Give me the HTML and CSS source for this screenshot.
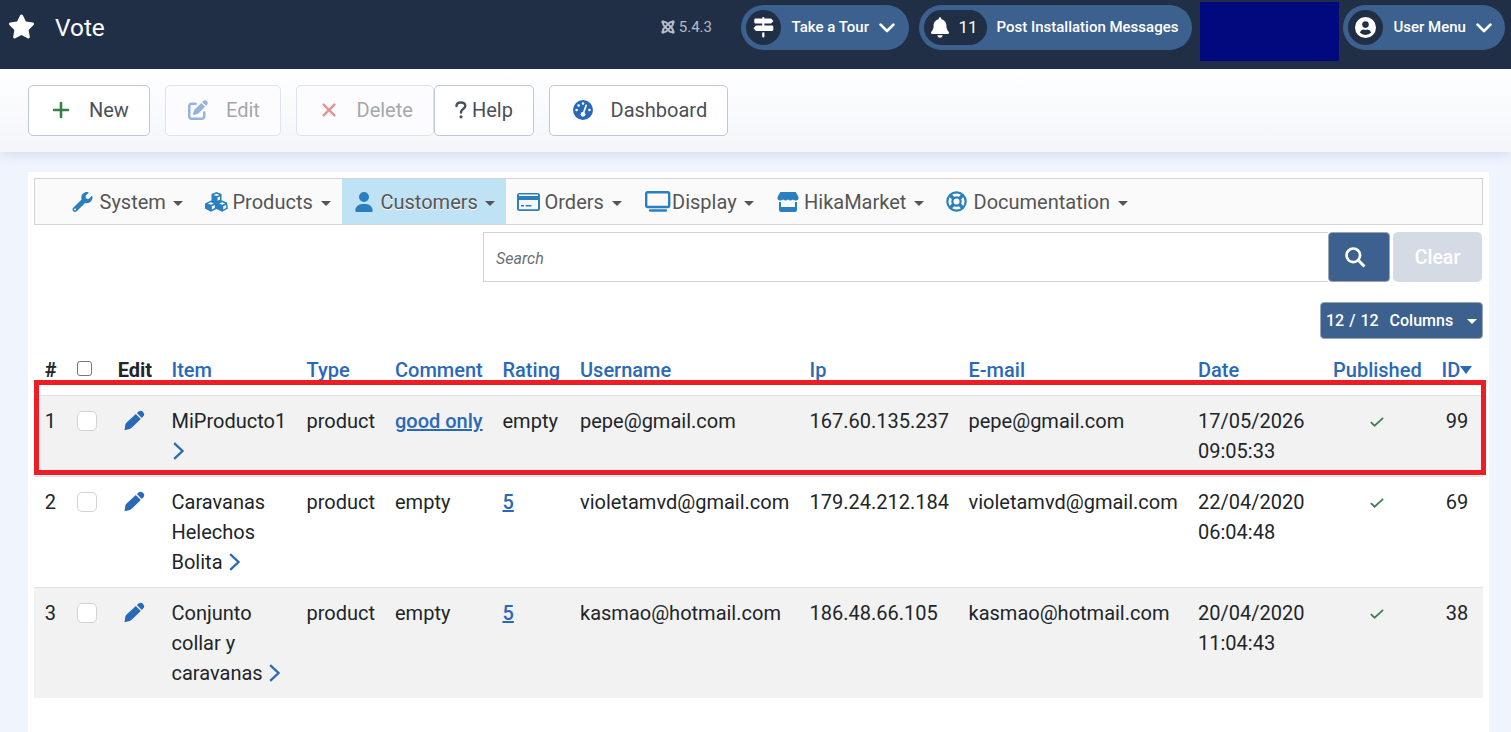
FILE: index.html
```html
<!DOCTYPE html>
<html lang="en">
<head>
<meta charset="utf-8">
<title>Vote</title>
<link rel="stylesheet" href="styles.css">
</head>
<body>
<svg class="defs" aria-hidden="true">
  <symbol id="pencil" viewBox="0 0 21 21"><path d="M.5 20.3 1.4 14.6Q1.700 13.400 2.600 12.600L11.800 3.900 16.800 8.900 8 17.600Q7 18.500 5.800 18.900ZM12.900 2.900 14.900 1.200Q16.900 0 18.900 1.700 21 3.800 19.800 5.800L17.900 7.900Z"/></symbol>
  <symbol id="chevron" viewBox="0 0 16 10"><path d="M1.6 1.6 8 8 14.4 1.6" fill="none" stroke="currentColor" stroke-width="2.7" stroke-linecap="round" stroke-linejoin="round"/></symbol>
  <symbol id="angle" viewBox="0 0 12 18"><path d="M1.2 1.2 9.5 9 1.2 16.8" fill="none" stroke="currentColor" stroke-width="2.3"/></symbol>
  <symbol id="check" viewBox="0 0 14 10"><path d="M.8 5.1 4.6 8.7 13.1 .9" fill="none" stroke="currentColor" stroke-width="1.8"/></symbol>
</svg>

<header class="header">
  <svg class="star" viewBox="0 0 576 512"><path d="M259.3 17.8L194 150.2 47.9 171.5c-26.2 3.8-36.7 36.1-17.7 54.6l105.7 103-25 145.5c-4.5 26.3 23.2 46 46.4 33.7L288 439.6l130.7 68.7c23.2 12.2 50.9-7.4 46.4-33.7l-25-145.5 105.7-103c19-18.5 8.5-50.8-17.7-54.6L382 150.2 316.7 17.8c-11.7-23.6-45.6-23.9-57.4 0z"/></svg>
  <h1 class="title">Vote</h1>
  <div class="version">
    <svg viewBox="0 0 14 14"><g fill="none" stroke="currentColor" stroke-width="1.9"><path d="M2.3 2.3Q4.6 1.4 6 3.2L10.8 8Q12.6 10 11.7 11.7M11.7 2.3Q12.6 4.600 10.800 6L6 10.800Q4 12.600 2.300 11.700M2.300 11.700Q1.400 9.500 3.200 8L8 3.200Q10 1.400 11.700 2.300M11.700 11.700Q9.500 12.600 8 10.800L3.200 6Q1.400 4 2.300 2.300"/></g><circle cx="2" cy="2" r="1.7"/><circle cx="12" cy="2" r="1.7"/><circle cx="2" cy="12" r="1.7"/><circle cx="12" cy="12" r="1.7"/></svg>
    <span>5.4.3</span>
  </div>
  <a class="pill tour">
    <span class="pill-icon"><svg width="22" height="21" viewBox="0 0 22 21"><path d="M9.200 1Q9.200 0 10.300 0T11.400 1V1.500H18L20.500 4 18 6.500H2.500Q1.300 6.500 1.300 5.300V2.700Q1.300 1.500 2.500 1.500H9.200ZM9.200 6.500H11.400V8.500H19Q20.300 8.500 20.300 9.700V12.800Q20.300 14 19 14H3L.500 11.200 3 8.500H9.200ZM9.200 15.500H11.400V19.500Q11.400 20.600 10.300 20.600T9.200 19.500Z"/></svg></span>
    <span class="pill-text">Take a Tour</span>
    <svg class="chev"><use href="#chevron"/></svg>
  </a>
  <a class="pill messages">
    <span class="pill-icon"><svg width="18" height="21" viewBox="0 0 448 512"><path d="M224 0c-17.700 0-32 14.300-32 32V51.200C119 66 64 130.600 64 208v18.800c0 47-17.300 92.400-48.500 127.600l-7.400 8.300c-8.400 9.400-10.400 22.900-5.300 34.400S19.400 416 32 416H416c12.600 0 24-7.400 29.200-18.900s3.100-25-5.300-34.400l-7.400-8.300C401.300 319.200 384 273.900 384 226.800V208c0-77.400-55-142-128-156.800V32c0-17.700-14.300-32-32-32zm45.300 493.300c12-12 18.700-28.300 18.700-45.300H224 160c0 17 6.700 33.300 18.700 45.300s28.300 18.700 45.300 18.700s33.300-6.700 45.300-18.700z"/></svg><b>11</b></span>
    <span class="pill-text">Post Installation Messages</span>
  </a>
  <div class="redacted"></div>
  <a class="pill user">
    <span class="pill-icon"><svg width="21" height="21" viewBox="0 0 21 21"><path fill-rule="evenodd" d="M10.500 0A10.500 10.500 0 1 1 10.500 21 10.500 10.500 0 0 1 10.500 0ZM10.500 4.300A3.300 3.300 0 1 0 10.500 10.900 3.300 3.300 0 0 0 10.500 4.300ZM4.800 15.600Q7 18 10.500 18T16.200 15.600Q15 12.600 12.500 12.600 10.500 13.300 8.500 12.600 6 12.600 4.800 15.600Z"/></svg></span>
    <span class="pill-text">User Menu</span>
    <svg class="chev"><use href="#chevron"/></svg>
  </a>
</header>

<div class="toolbar">
  <button class="btn new"><svg viewBox="0 0 20 20"><path d="M10 3V17M3 10H17" fill="none" stroke="currentColor" stroke-width="2.6" stroke-linecap="round"/></svg><span>New</span></button>
  <button class="btn edit off"><svg viewBox="0 0 512 512"><path d="M471.600 21.700c-21.900-21.900-57.300-21.900-79.200 0L362.300 51.700l97.900 97.900 30.100-30.100c21.900-21.900 21.900-57.300 0-79.200L471.600 21.700zm-299.200 220c-6.100 6.100-10.800 13.600-13.500 21.900l-29.600 88.800c-2.900 8.600-.6 18.100 5.800 24.600s15.900 8.700 24.600 5.800l88.800-29.600c8.200-2.700 15.700-7.400 21.900-13.500L437.700 172.300 339.700 74.300 172.400 241.700zM96 64C43 64 0 107 0 160V416c0 53 43 96 96 96H352c53 0 96-43 96-96V320c0-17.700-14.300-32-32-32s-32 14.300-32 32v96c0 17.700-14.300 32-32 32H96c-17.700 0-32-14.300-32-32V160c0-17.700 14.300-32 32-32h96c17.700 0 32-14.300 32-32s-14.300-32-32-32H96z"/></svg><span>Edit</span></button>
  <button class="btn delete off"><svg viewBox="0 0 20 20"><path d="M4.600 4.600 15.400 15.400M15.400 4.600 4.600 15.400" fill="none" stroke="currentColor" stroke-width="2.400" stroke-linecap="round"/></svg><span>Delete</span></button>
  <button class="btn help"><svg viewBox="0 0 12 18"><path d="M1.500 5Q1.500 1.500 5.700 1.500 10.300 1.500 10.300 5C10.300 8 6 7.500 6 11.500" fill="none" stroke="currentColor" stroke-width="2.400" stroke-linecap="round"/><circle cx="6" cy="15.800" r="1.600"/></svg><span>Help</span></button>
  <button class="btn dash"><svg viewBox="0 0 20 20"><circle cx="10" cy="10" r="10"/><g fill="#fff"><circle cx="3.600" cy="10" r="1.300"/><circle cx="5.600" cy="5.500" r="1.300"/><circle cx="10" cy="3.500" r="1.300"/><circle cx="16.400" cy="10" r="1.300"/><circle cx="10" cy="14.300" r="2.400"/></g><path d="M10.300 13.500 13.200 5.300" stroke="#fff" stroke-width="1.700" stroke-linecap="round"/></svg><span>Dashboard</span></button>
</div>

<main class="panel">
  <nav class="menu">
    <a class="item"><i><svg width="21" height="20" viewBox="0 0 512 512"><path d="M507.730 109.100c-2.240-9.030-13.540-12.090-20.120-5.510l-74.360 74.360-67.880-11.310-11.310-67.880 74.360-74.360c6.620-6.620 3.430-17.900-5.660-20.160-47.380-11.740-99.550.91-136.580 37.930-39.640 39.640-50.550 97.100-34.050 147.200L18.740 402.760c-24.990 24.990-24.990 65.510 0 90.500 24.990 24.990 65.510 24.990 90.500 0l213.210-213.210c50.120 16.710 107.470 5.680 147.370-34.220 37.070-37.070 49.700-89.320 37.910-136.730zM64 472c-13.250 0-24-10.750-24-24 0-13.260 10.750-24 24-24s24 10.740 24 24c0 13.250-10.750 24-24 24z"/></svg></i><span>System</span></a>
    <a class="item"><i><svg width="23" height="20" viewBox="0 0 23 20"><path fill-rule="evenodd" d="M11.500 0 16.500 2V8.300L22 10.500 23 16.500 17.200 19.800 11.500 17 5.800 19.800 0 16.500V11.500L6.500 8.300V2ZM11.500 1.700 8.500 2.900 11.500 4.100 14.500 2.900ZM12.500 5.600V8.700L15 7.600V4.500ZM5.800 10.200 2.700 11.500 5.800 12.700 8.900 11.500ZM17.200 10.200 14.100 11.500 17.200 12.700 20.300 11.500ZM6.800 14.300V17.500L9.800 16V13ZM18.200 14.300V17.500L21.200 16V13Z"/></svg></i><span>Products</span></a>
    <a class="item active"><i class="in"><svg width="18" height="20" viewBox="0 0 448 512"><path d="M224 256A128 128 0 1 0 224 0a128 128 0 1 0 0 256zm-45.700 48C79.800 304 0 383.800 0 482.300C0 498.700 13.300 512 29.700 512H418.300c16.400 0 29.700-13.300 29.700-29.700C448 383.800 368.200 304 269.700 304H178.300z"/></svg></i><span>Customers</span></a>
    <a class="item"><i><svg width="23" height="18" viewBox="0 0 23 18"><path fill-rule="evenodd" d="M2.500 0H20.500Q23 0 23 2.500V15.500Q23 18 20.500 18H2.500Q0 18 0 15.500V2.500Q0 0 2.500 0ZM2 1.500V3H21V1.500ZM2 7V16.200H21V7ZM4 12H7V13.500H4ZM8.500 12H14.500V13.500H8.500Z"/></svg></i><span>Orders</span></a>
    <a class="item"><i><svg width="26" height="21" viewBox="0 0 26 21"><rect x="1.200" y="1.300" width="23" height="14.700" rx="1.500" fill="none" stroke="currentColor" stroke-width="2.400"/><path d="M5 19.500H21" stroke="currentColor" stroke-width="2.300" stroke-linecap="round"/></svg></i><span>Display</span></a>
    <a class="item"><i><svg width="22" height="20" viewBox="0 0 22 20"><path d="M3.300 0H18.700L21.500 5Q22 8.200 19 8.500 17 8.700 15.900 7.500 13.500 9.300 11 7.500 8.500 9.300 6.100 7.500 5 8.700 3 8.500 0 8.200.500 5ZM2 10H4V15H18V10H20V18Q20 20 18 20H4Q2 20 2 18Z"/></svg></i><span>HikaMarket</span></a>
    <a class="item"><i><svg width="21" height="21" viewBox="0 0 21 21"><g fill="none" stroke="currentColor"><circle cx="10.500" cy="10.500" r="9.200" stroke-width="2.200"/><circle cx="10.500" cy="10.500" r="4.100" stroke-width="2.200"/><path d="M4 4 8 8M17 4 13 8M4 17 8 13M17 17 13 13" stroke-width="3.300"/></g></svg></i><span>Documentation</span></a>
  </nav>

  <div class="search">
    <input type="text" placeholder="Search">
    <button class="go"><svg viewBox="0 0 21 21"><circle cx="8.300" cy="8.300" r="6.800" fill="none" stroke="#fff" stroke-width="2.700"/><path d="M13.300 13.300 19.500 19.500" stroke="#fff" stroke-width="3"/></svg></button>
    <button class="clear">Clear</button>
  </div>
  <div class="columns"><button><span>12 / 12</span><span>Columns</span></button></div>

  <div class="list">
    <table>
      <colgroup><col class="c1"><col class="c2"><col class="c3"><col class="c4"><col class="c5"><col class="c6"><col class="c7"><col class="c8"><col class="c9"><col class="c10"><col class="c11"><col class="c12"><col class="c13"></colgroup>
      <thead><tr><th>#</th><th><span class="all"></span></th><th>Edit</th><th><a>Item</a></th><th><a>Type</a></th><th><a>Comment</a></th><th><a>Rating</a></th><th><a>Username</a></th><th><a>Ip</a></th><th><a>E-mail</a></th><th><a>Date</a></th><th><a>Published</a></th><th><a class="sorted">ID</a></th></tr></thead>
      <tbody>
        <tr><td>1</td><td><span class="box"></span></td><td><svg class="pen"><use href="#pencil"/></svg></td><td>MiProducto1 <svg class="angle"><use href="#angle"/></svg></td><td>product</td><td><a class="link">good only</a></td><td>empty</td><td>pepe@gmail.com</td><td>167.60.135.237</td><td>pepe@gmail.com</td><td>17/05/2026 09:05:33</td><td class="mid"><svg class="check"><use href="#check"/></svg></td><td class="mid">99</td></tr>
        <tr><td>2</td><td><span class="box"></span></td><td><svg class="pen"><use href="#pencil"/></svg></td><td>Caravanas Helechos Bolita <svg class="angle"><use href="#angle"/></svg></td><td>product</td><td>empty</td><td><a class="link">5</a></td><td>violetamvd@gmail.com</td><td>179.24.212.184</td><td>violetamvd@gmail.com</td><td>22/04/2020 06:04:48</td><td class="mid"><svg class="check"><use href="#check"/></svg></td><td class="mid">69</td></tr>
        <tr><td>3</td><td><span class="box"></span></td><td><svg class="pen"><use href="#pencil"/></svg></td><td>Conjunto collar y caravanas <svg class="angle"><use href="#angle"/></svg></td><td>product</td><td>empty</td><td><a class="link">5</a></td><td>kasmao@hotmail.com</td><td>186.48.66.105</td><td>kasmao@hotmail.com</td><td>20/04/2020 11:04:43</td><td class="mid"><svg class="check"><use href="#check"/></svg></td><td class="mid">38</td></tr>
      </tbody>
    </table>
    <div class="highlight"></div>
  </div>
</main>
</body>
</html>
```
FILE: styles.css
```css
* { box-sizing: border-box; }
html, body { height: 100%; }
body {
  margin: 0;
  display: flex;
  flex-direction: column;
  overflow: hidden;
  background: #f0f4fd;
  color: #212529;
  font: 400 20px/30px Roboto, sans-serif;
}
svg { fill: currentColor; flex: none; }
button { font: inherit; margin: 0; }
.defs { position: absolute; width: 0; height: 0; }

.header {
  position: relative;
  z-index: 1;
  height: 69px;
  flex: none;
  background: #202f46;
  color: #fff;
  display: flex;
  align-items: flex-start;
  padding: 5px 6px 0 8px;
}
.star { width: 27px; height: 25px; margin-top: 9px; }
.title { margin: 7px 0 0 20px; font-size: 24.4px; font-weight: 400; line-height: 31px; }
.version {
  display: flex;
  align-items: center;
  gap: 4px;
  height: 43px;
  margin-left: auto;
  margin-right: 29px;
  color: #b4bac6;
  font-size: 15px;
}
.version svg { width: 14px; height: 14px; }
.pill {
  display: flex;
  align-items: center;
  height: 45px;
  padding: 5px;
  border-radius: 23px;
  background: #3d618f;
  font-size: 15px;
  font-weight: 500;
  white-space: nowrap;
}
.pill-icon {
  display: flex;
  align-items: center;
  justify-content: center;
  width: 35px;
  height: 35px;
  border-radius: 18px;
  background: #202f46;
}
.pill-icon b { font-size: 17px; font-weight: 400; line-height: 28px; padding-bottom: 2px; }
.tour { width: 168px; margin-right: 10px; }
.messages { width: 273px; margin-right: 8px; }
.messages .pill-icon { width: 63px; gap: 9px; }
.messages .pill-icon svg { margin-left: -2px; }
.user { width: 162px; }
.pill-text { margin-left: 9.5px; padding-bottom: 2px; }
.tour .pill-text, .user .pill-text { margin-left: 10.5px; }
.chev { width: 16px; height: 10px; margin: 0 9px 0 auto; }
.user .chev { margin-right: 8px; }
.redacted { width: 139px; height: 59px; margin: -3px 4px 0 0; background: #000a7e; }

.toolbar {
  display: flex;
  flex: none;
  height: 83px;
  padding: 16px 28px;
  background: linear-gradient(#fff, #f3f5fa);
  box-shadow: 0 2px 12px #cedaeb;
}
.btn {
  display: flex;
  align-items: center;
  height: 51px;
  padding: 0 20px 2px;
  border: 1px solid #bdc7d6;
  border-radius: 5px;
  background: #fff;
  color: #495057;
}
.btn svg { width: 20px; height: 20px; }
.btn.off { border-color: #dfe3eb; background: #fcfcfe; color: #a5a7aa; }
.new { width: 122px; margin-right: 15px; padding-left: 22px; }
.new svg { color: #3a7d4d; margin-right: 18px; }
.edit { width: 116px; margin-right: 15px; padding-left: 22px; }
.edit svg { color: #94b3dd; margin-right: 18px; }
.delete { width: 138px; padding-left: 22px; }
.delete svg { color: #e29494; margin-right: 17.5px; }
.help { width: 100px; margin-right: 15px; }
.help svg { width: 12px; height: 18px; margin-right: 5px; }
.dash { width: 179px; padding-left: 23px; }
.dash svg { color: #2a69b8; margin-right: 17.5px; }

.panel { flex: 1; margin: 20px 22px 0 28px; padding: 6px; background: #fff; }
.menu {
  display: grid;
  grid-template-columns: 133px 148px 164px 127.5px 132px 169.5px 204px;
  height: 47px;
  padding-left: 26px;
  border: 1px solid #d4d4d4;
  background: #fafafa;
}
.item {
  display: flex;
  align-items: center;
  padding: 0 11.5px 0 11px;
  color: #555;
  text-shadow: 0 1px 0 #fff;
}
.item.active { background: #bfe2f5; }
.item::after {
  content: "";
  margin: 4px 0 0 auto;
  border: 5px solid transparent;
  border-top-color: #555;
  border-bottom: 0;
}
.item i { display: flex; width: 27.5px; color: #2a7fbf; }
.item i.in { padding-left: 2px; }

.search { display: flex; height: 50px; margin: 7px 1px 0 449px; }
.search input {
  flex: 1;
  min-width: 0;
  padding: 2px 12px 0;
  border: 1px solid #ced4da;
  border-right: 0;
  outline: 0;
  font: italic 16px Roboto, sans-serif;
}
.search input::placeholder { color: #6a6f75; opacity: 1; }
.go {
  width: 62px;
  margin-right: 3px;
  padding: 0 7px 0 0;
  border: 1px solid #9ca7b5;
  border-radius: 4px;
  background: #3d618f;
}
.go svg { width: 21px; height: 21px; display: block; margin: 0 auto; }
.clear { width: 89px; padding: 2px 0 0; border: 0; border-radius: 5px; background: #d5dbe4; color: #fff; font-size: 19.5px; font-weight: 500; }

.columns { display: flex; justify-content: flex-end; margin-top: 20px; }
.columns button {
  display: flex;
  align-items: center;
  gap: 11px;
  width: 163px;
  height: 37px;
  padding: 1px 5px 0;
  border: 1px solid #9ca7b5;
  border-radius: 4px;
  background: #3d618f;
  color: #fff;
  font-size: 16px;
  font-weight: 500;
  word-spacing: 1px;
  white-space: nowrap;
}
.columns button::after {
  content: "";
  margin-left: auto;
  border: 5px solid transparent;
  border-top-color: #fff;
  border-bottom: 0;
}

.list { position: relative; margin-top: 5px; }
table { width: 1449px; table-layout: fixed; border-collapse: separate; border-spacing: 0; }
th { height: 51px; padding: 1px 0 0 10px; text-align: left; font-weight: 500; white-space: nowrap; }
th:nth-child(1), th:nth-child(3) { font-weight: 700; }
th:nth-child(1), td:nth-child(1), th:nth-child(3) { padding-left: 10.7px; }
th a { color: #2a69b8; }
td { padding: 10px 0 10px 10px; border-top: 1px solid #dee2e6; vertical-align: top; }
td:nth-child(4) { padding-right: 10px; }
td:nth-child(9), th:nth-child(9) { padding-left: 9.500px; }
td:nth-child(11) { padding-right: 15px; }
tbody tr:nth-child(odd) { background: #f2f2f2; }
td.mid { padding-left: 0; text-align: center; }
.c1 { width: 33px; }
.c2 { width: 40px; }
.c3 { width: 54.5px; }
.c4 { width: 135px; }
.c5 { width: 88.5px; }
.c6 { width: 107.5px; }
.c7 { width: 77.5px; }
.c8 { width: 230px; }
.c9 { width: 158.5px; }
.c10 { width: 229.5px; }
.c11 { width: 134px; }
.c12 { width: 109px; }
.c13 { width: 52px; }
th:nth-child(12) { padding-left: 11px; }
th:nth-child(13) { padding-left: 10.5px; }
.all { display: block; width: 15px; height: 15px; margin-bottom: 3px; border: 1.5px solid #767676; border-radius: 3px; }
.box { display: block; width: 20px; height: 20px; margin-top: 5px; border: 1px solid #ced4da; border-radius: 5px; background: #fff; }
.pen { display: block; width: 21px; height: 21px; margin: 4px 0 0 7px; color: #2a69b8; }
.angle { width: 12px; height: 18px; margin-left: 1.500px; color: #2a69b8; vertical-align: -2px; }
.check { width: 14px; height: 10px; color: #457d54; vertical-align: 1px; }
.link { color: #2a69b8; font-weight: 500; text-decoration: underline; }
.sorted { display: flex; align-items: center; }
.sorted::after { content: ""; border: 6.5px solid transparent; border-top: 8px solid #2a69b8; border-bottom: 0; }
.highlight {
  position: absolute;
  left: 0;
  top: 36px;
  width: 1452px;
  height: 95px;
  border: 5px solid #ee1c25;
}
```
